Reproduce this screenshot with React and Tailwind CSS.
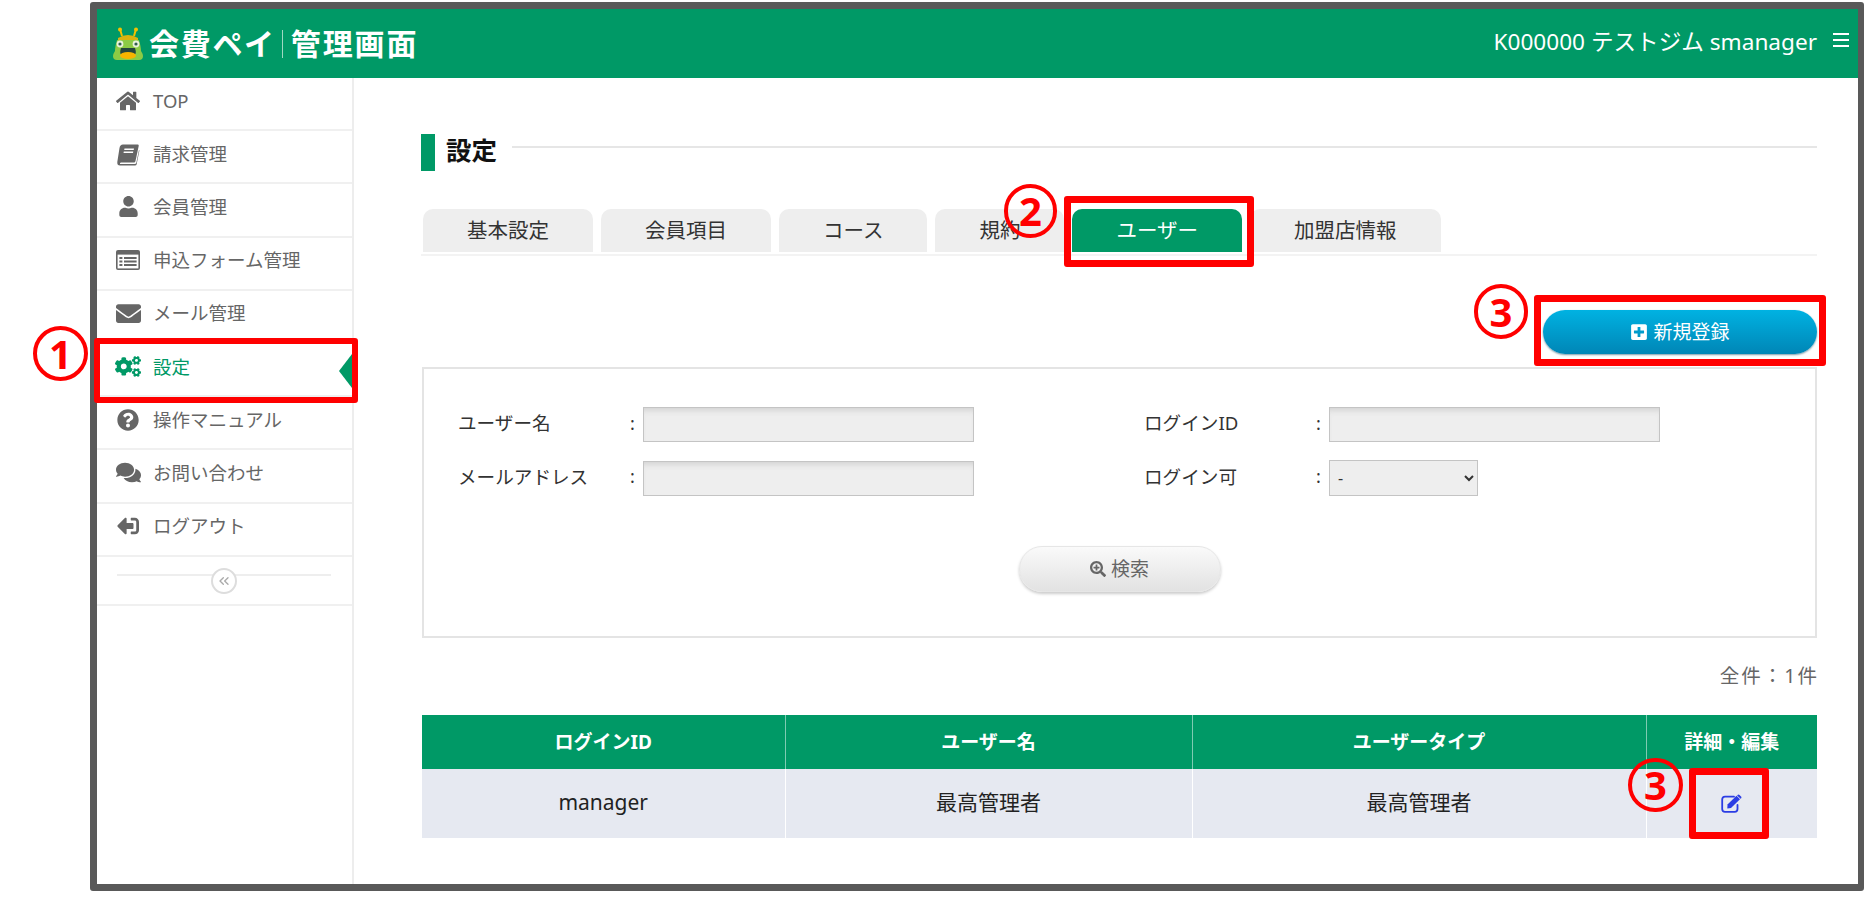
import {
  FaCogs,
  FaComments,
  FaEnvelope,
  FaHome,
  FaPlusSquare,
  FaQuestionCircle,
  FaSearchPlus,
  FaSignOutAlt,
  FaUser,
} from "react-icons/fa";
import { ChevronsLeft } from "lucide-react";

function BookIcon() {
  return (
    <svg viewBox="0 0 24 24" className="w-[24px] h-[24px]" fill="currentColor">
      <path d="M7 2.5 H22 Q23 2.5 22.7 4 L19.5 19 Q19.2 20.5 18 20.5 H5 Q3.6 20.5 4 22 H18.5 Q20 22 20.4 20.5 L23 8 L23.4 8.5 L20.6 22.5 Q20.3 23.5 19 23.5 H4 Q1 23.5 1.3 20 L3.5 6 Q4 2.5 7 2.5 Z" />
      <path d="M8.5 6.5 H18 L17.7 8 H8.2 Z M7.8 9.5 H17.3 L17 11 H7.5 Z" fill="#ffffff" />
    </svg>
  );
}

function ListAltIcon() {
  return (
    <svg viewBox="0 0 24 20" className="w-[24px] h-[20px]">
      <rect x="0" y="0" width="24" height="20" rx="2" fill="currentColor" />
      <rect x="1.6" y="4.6" width="20.8" height="13.8" fill="#ffffff" />
      <path d="M3.4 7 H6.4 V9 H3.4 Z M3.4 10.5 H6.4 V12.5 H3.4 Z M3.4 14 H6.4 V16 H3.4 Z M8 7 H20.6 V9 H8 Z M8 10.5 H20.6 V12.5 H8 Z M8 14 H20.6 V16 H8 Z" fill="currentColor" />
    </svg>
  );
}

function EditIcon() {
  return (
    <svg viewBox="0 0 22 19" className="inline-block w-[22px] h-[19px] text-[#2b3de4] mb-[4px]">
      <path d="M16.5 11 V15 Q16.5 17.8 13.7 17.8 H4 Q1.2 17.8 1.2 15 V5.5 Q1.2 2.7 4 2.7 H13" fill="none" stroke="currentColor" strokeWidth="1.8" strokeLinecap="round" />
      <path d="M6.5 10.5 L15.5 1.8 L19 5.2 L10 14 L6.3 14.4 Z" fill="currentColor" />
      <path d="M16.5 1 Q17.5 0 18.5 1 L20 2.5 Q21 3.5 20 4.5 L19.6 4.8 L16.1 1.4 Z" fill="currentColor" />
    </svg>
  );
}

const menu = [
  { label: "TOP", icon: <FaHome className="w-[24px] h-[24px]" /> },
  { label: "請求管理", icon: <BookIcon /> },
  { label: "会員管理", icon: <FaUser className="w-[21px] h-[21px]" /> },
  { label: "申込フォーム管理", icon: <ListAltIcon /> },
  { label: "メール管理", icon: <FaEnvelope className="w-[25px] h-[25px]" /> },
  { label: "設定", icon: <FaCogs className="w-[27px] h-[27px]" />, active: true },
  { label: "操作マニュアル", icon: <FaQuestionCircle className="w-[22px] h-[22px]" /> },
  { label: "お問い合わせ", icon: <FaComments className="w-[25px] h-[25px]" /> },
  { label: "ログアウト", icon: <FaSignOutAlt className="w-[22px] h-[22px] -scale-x-100" /> },
];

const tabs = ["基本設定", "会員項目", "コース", "規約", "ユーザー", "加盟店情報"];

function FrogLogo() {
  return (
    <svg viewBox="0 0 30 33" className="w-[30px] h-[33px] shrink-0">
      <path d="M9 9 L7 2 M21 9 L23 2" stroke="#f2c200" strokeWidth="2" fill="none" />
      <circle cx="7" cy="2.5" r="2" fill="#f2c200" />
      <circle cx="23" cy="2.5" r="2" fill="#f2c200" />
      <path d="M5 11 Q15 5 25 11 L25 14 L5 14 Z" fill="#d9b310" />
      <path d="M4 13 H26 Q28 20 28 24 Q30 27 30 29 Q30 33 26 33 H4 Q0 33 0 29 Q0 27 2 24 Q2 20 4 13 Z" fill="#8ccb45" />
      <circle cx="7" cy="17" r="3.4" fill="#e8f2dc" />
      <circle cx="23" cy="17" r="3.4" fill="#e8f2dc" />
      <circle cx="7" cy="17" r="1.6" fill="#2f5d50" />
      <circle cx="23" cy="17" r="1.6" fill="#2f5d50" />
      <path d="M8 21 H22 Q24 27 21 28 H9 Q6 27 8 21 Z" fill="#23443c" />
      <ellipse cx="15" cy="28.5" rx="8" ry="3.6" fill="#f6b400" />
    </svg>
  );
}

function MenuRow({ item }) {
  return (
    <div className={`relative h-[53.2px] border-b-2 border-[#f0f0f0] flex items-center pb-[6px] pl-[18px] ${item.active ? "text-[#009966]" : "text-[#666666]"}`}>
      <span className="w-[26px] h-[26px] flex items-center justify-center">{item.icon}</span>
      <span className="ml-[12px] text-[18.5px]">{item.label}</span>
      {item.active && (
        <span className="absolute right-0 top-[10px] w-0 h-0 border-y-[17px] border-y-transparent border-r-[13px] border-r-[#009966]" />
      )}
    </div>
  );
}

function Field({ label, children }) {
  return (
    <div className="flex items-center">
      <span className="w-[172px] pb-[3px] text-[18.6px] text-[#333333]">{label}</span>
      <span className="w-[13px] pb-[3px] text-[18px] text-[#333333]">:</span>
      {children}
    </div>
  );
}

function GrayInput() {
  return (
    <input
      readOnly
      className="w-[331px] h-[35px] bg-[#eeeeee] border border-[#c4c4c4] shadow-[inset_0_6px_6px_-4px_#cfcfcf]"
    />
  );
}

function RedBox({ className }) {
  return <div className={`absolute border-[#ff0000] rounded-[3px] ${className}`} />;
}

function Num({ children, className }) {
  return (
    <div className={`absolute rounded-full border-[4px] border-[#ff0000] flex items-center justify-center text-[#ff0000] text-[40px] font-bold leading-none ${className}`}>
      {children}
    </div>
  );
}

export default function App() {
  return (
    <div className="w-[1867px] h-[897px] overflow-hidden bg-white pl-[90px] pt-[2px] font-['Noto_Sans','Noto_Sans_CJK_JP',sans-serif]">
      <div className="relative w-[1774px] h-[889px] flex flex-col border-y-[7px] border-l-[7px] border-r-[6px] border-[#595959] rounded-[3px]">
        {/* Header */}
        <header className="h-[69px] shrink-0 bg-[#009966] flex items-center justify-between pl-[16px] pr-[9px] text-white">
          <div className="flex items-center">
            <FrogLogo />
            <span className="ml-[6px] text-[30px] font-bold tracking-[1.7px] leading-none whitespace-nowrap">会費ペイ</span>
            <span className="ml-[6px] w-[1px] h-[28px] bg-[#9fd8c2]" />
            <span className="ml-[8px] text-[30px] font-bold tracking-[1.9px] leading-none whitespace-nowrap">管理画面</span>
          </div>
          <div className="flex items-center">
            <span className="text-[22.6px] pb-[3px] whitespace-nowrap">K000000 テストジム smanager</span>
            <span className="ml-[16px] mb-[6px] w-[16px] flex flex-col gap-[4px]">
              <span className="h-[2px] bg-white" />
              <span className="h-[2px] bg-white" />
              <span className="h-[2px] bg-white" />
            </span>
          </div>
        </header>

        <div className="flex flex-1 min-h-0">
          {/* Sidebar */}
          <aside className="w-[257px] shrink-0 border-r-2 border-[#ededed]">
            {menu.map((item) => (
              <MenuRow key={item.label} item={item} />
            ))}
            <div className="relative h-[49px] border-b-2 border-[#f0f0f0]">
              <div className="absolute left-[20px] right-[21px] top-[17px] h-[2px] bg-[#eeeeee]" />
              <div className="absolute left-[114px] top-[11px] w-[26px] h-[26px] rounded-full border-2 border-[#dddddd] bg-white flex items-center justify-center text-[#aaaaaa]">
                <ChevronsLeft className="w-[16px] h-[16px]" strokeWidth={2} />
              </div>
            </div>
          </aside>

          {/* Main */}
          <main className="flex-1 min-w-0 pl-[67px] pr-[41px] pt-[56px]">
            <div className="flex h-[37px]">
              <span className="w-[14px] bg-[#009966]" />
              <span className="ml-[11px] text-[25.5px] font-bold leading-[32px] text-[#111111]">設定</span>
              <span className="ml-[15px] flex-1 h-[2px] mt-[12px] bg-[#e6e6e6]" />
            </div>

            <div className="mt-[38px] flex gap-[8px] pl-[2px] pb-[2px] border-b-2 border-[#f3f3f3]">
              {tabs.map((tab) => (
                <div
                  key={tab}
                  className={`h-[43px] px-[44px] rounded-t-[10px] flex items-center text-[20.5px] ${tab === "ユーザー" ? "bg-[#009966] text-white" : "bg-[#eeeeee] text-[#333333]"}`}
                >
                  {tab}
                </div>
              ))}
            </div>

            <div className="mt-[54px] flex justify-end">
              <button className="w-[274px] h-[44px] rounded-full bg-gradient-to-b from-[#00b2e2] to-[#0086b6] shadow-[0_1px_2px_#7a9aa8] text-white text-[19px] flex items-center justify-center">
                <FaPlusSquare className="w-[18px] h-[18px] mr-[5px]" />
                新規登録
              </button>
            </div>

            {/* Search panel */}
            <section className="mt-[13px] ml-[1px] h-[271px] border-2 border-[#e4e4e4] pl-[34px] pt-[38px] flex flex-col">
              <div className="grid grid-cols-[686px_1fr] gap-y-[18px]">
                <Field label="ユーザー名"><GrayInput /></Field>
                <Field label="ログインID"><GrayInput /></Field>
                <Field label="メールアドレス"><GrayInput /></Field>
                <Field label="ログイン可">
                  <select className="w-[149px] h-[36px] bg-[#eeeeee] border border-[#c4c4c4] text-[16px] text-[#333333] pl-[4px]">
                    <option>-</option>
                  </select>
                </Field>
              </div>
              <div className="mt-[50px] pr-[34px] flex justify-center">
                <button className="w-[202px] h-[46px] rounded-full bg-gradient-to-b from-[#fafafa] to-[#e2e2e2] border border-[#e6e6e6] shadow-[0_2px_3px_#cccccc] text-[#666666] text-[19px] flex items-center justify-center">
                  <FaSearchPlus className="w-[16px] h-[16px] mr-[5px]" />
                  検索
                </button>
              </div>
            </section>

            <div className="mt-[24px] -mr-[2px] text-right text-[19.5px] tracking-[2px] leading-[28px] text-[#666666]">全件：1件</div>

            {/* Table */}
            <table className="mt-[25px] ml-[1px] w-[calc(100%-1px)] table-fixed border-collapse text-center">
              <thead>
                <tr className="h-[54px] bg-[#009966] text-white text-[19px]">
                  <th className="w-[363px] font-bold">ログインID</th>
                  <th className="w-[407px] font-bold border-l border-[#7fcbb2]">ユーザー名</th>
                  <th className="w-[454px] font-bold border-l border-[#7fcbb2]">ユーザータイプ</th>
                  <th className="font-bold border-l border-[#7fcbb2]">詳細・編集</th>
                </tr>
              </thead>
              <tbody>
                <tr className="h-[69px] bg-[#e6e9f1] text-[21px] text-[#222222]">
                  <td className="pb-[2px]">manager</td>
                  <td className="pb-[2px] border-l border-white">最高管理者</td>
                  <td className="pb-[2px] border-l border-white">最高管理者</td>
                  <td className="border-l border-white">
                    <EditIcon />
                  </td>
                </tr>
              </tbody>
            </table>
          </main>
        </div>

        {/* Annotations drawn over the screen */}
        <RedBox className="left-[-3px] top-[329px] w-[264px] h-[65px] border-[6px]" />
        <RedBox className="left-[967px] top-[187px] w-[190px] h-[71px] border-[7px]" />
        <RedBox className="left-[1437px] top-[286px] w-[292px] h-[71px] border-[7px]" />
        <RedBox className="left-[1592px] top-[759px] w-[80px] h-[71px] border-[7px]" />
        <Num className="left-[-64px] top-[317px] w-[55px] h-[55px]">1</Num>
        <Num className="left-[907px] top-[175px] w-[53px] h-[54px]">2</Num>
        <Num className="left-[1377px] top-[275px] w-[54px] h-[55px]">3</Num>
        <Num className="left-[1531px] top-[749px] w-[55px] h-[54px]">3</Num>
      </div>
    </div>
  );
}
